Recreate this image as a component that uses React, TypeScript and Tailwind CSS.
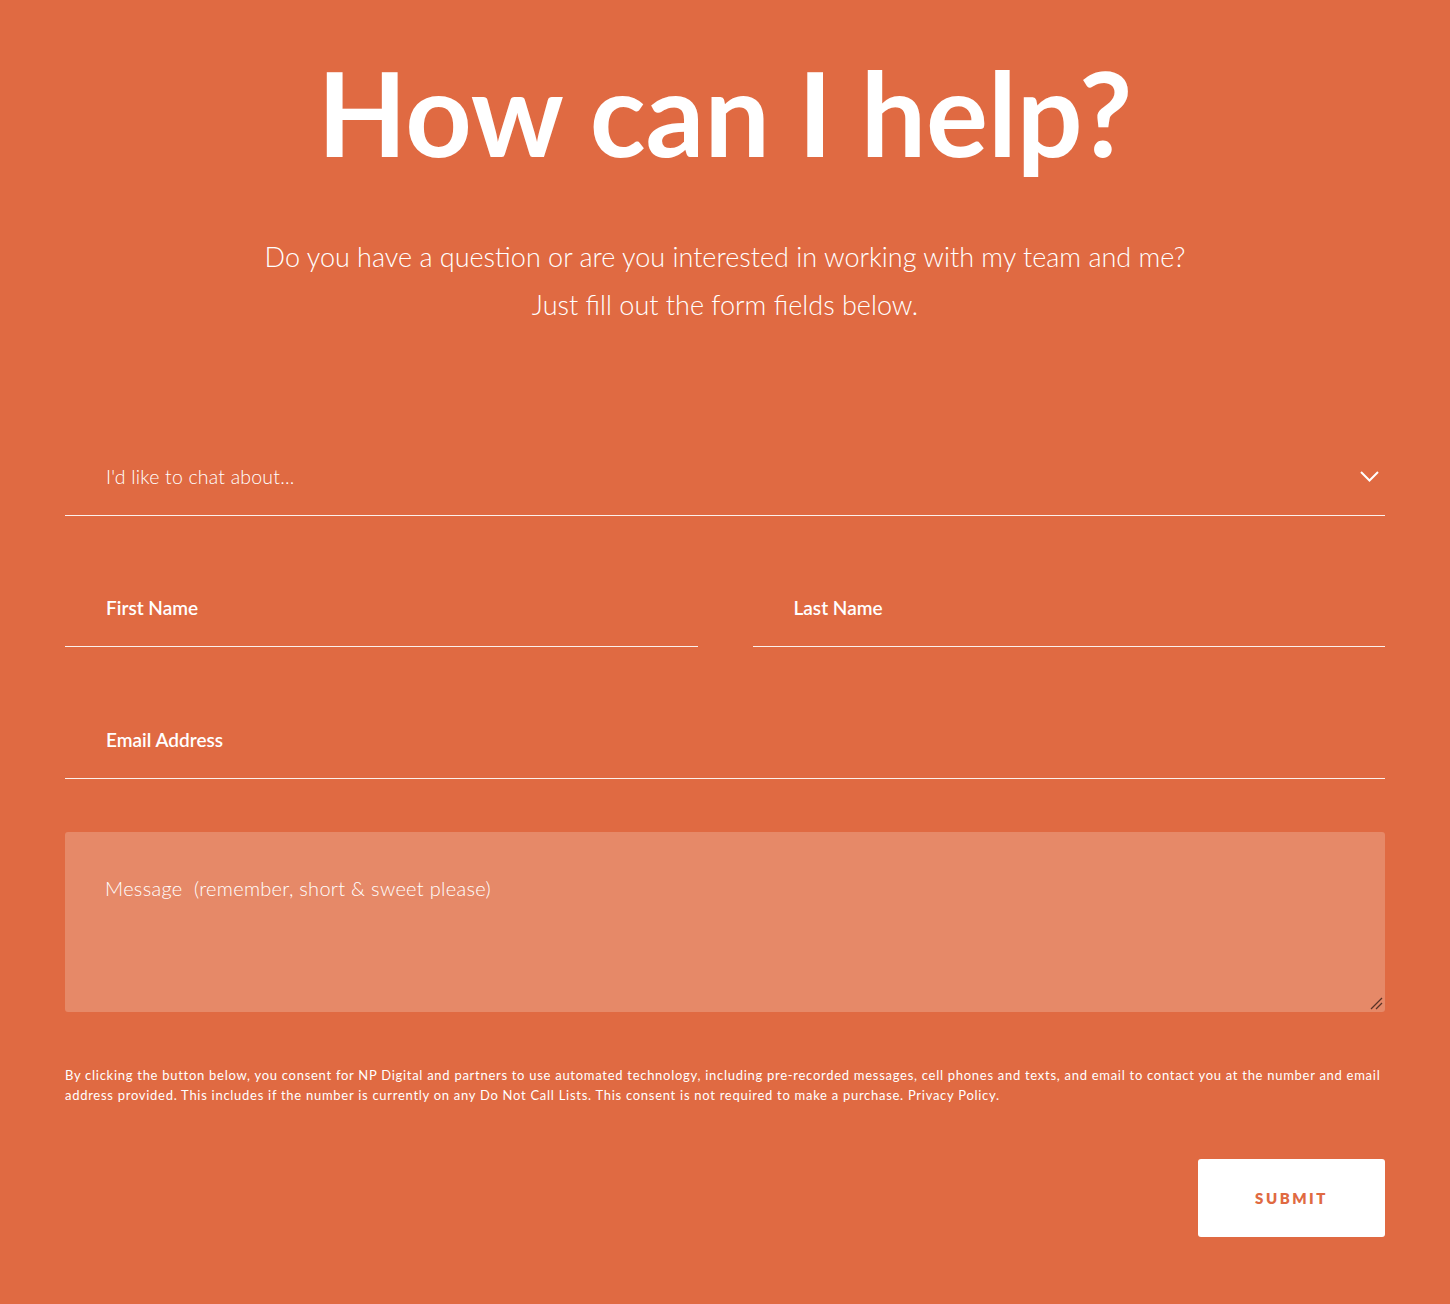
const font = { fontFamily: "Lato, 'Open Sans', sans-serif" };

function LineField({ label }: { label: string }) {
  return (
    <div className="border-b border-white/90 h-[92px] flex items-end pb-[29px] pl-[41px]">
      <span className="text-[19px] leading-none text-white font-semibold">{label}</span>
    </div>
  );
}

export default function App() {
  return (
    <div className="min-h-[1304px] bg-[#e06a42] text-white" style={font}>
      <div className="mx-auto w-[1320px] pt-[48px]">
        <h1 className="text-center text-[116px] font-bold leading-[130px]">How can I help?</h1>

        <div className="mt-[55px] text-center text-[27px] font-light leading-[48px]">
          <p>Do you have a question or are you interested in working with my team and me?</p>
          <p>Just fill out the form fields below.</p>
        </div>

        <form className="mt-[109px]">
          {/* topic select */}
          <div className="border-b border-white/90 h-[78px] flex items-center justify-between pl-[41px] pr-[6px]">
            <span className="text-[19.5px] font-light tracking-[0.2px]">I'd like to chat about...</span>
            <svg className="w-[19px] h-[11px]" viewBox="0 0 19 11" fill="none">
              <path d="M1 1 L9.5 9.5 L18 1" stroke="white" strokeWidth="2" />
            </svg>
          </div>

          <div className="grid grid-cols-2 gap-[55px] mt-[39px]">
            <LineField label="First Name" />
            <LineField label="Last Name" />
          </div>

          <div className="mt-[40px]">
            <LineField label="Email Address" />
          </div>

          <div className="relative mt-[53px] h-[180px] rounded-[3px] bg-[#e68968] pl-[40px] pt-[41px]">
            <span className="text-[20px] font-light tracking-[0.3px]">Message&nbsp; (remember, short &amp; sweet please)</span>
            <svg className="absolute right-[2px] bottom-[2px] w-[14px] h-[14px]" viewBox="0 0 14 14">
              <path d="M2 13 L13 2" stroke="#5a3326" strokeWidth="1.3" />
              <path d="M7 13 L13 7" stroke="#5a3326" strokeWidth="1.3" />
            </svg>
          </div>

          <p className="mt-[53px] text-[13px] leading-[20px] font-normal tracking-[0.72px]">
            By clicking the button below, you consent for NP Digital and partners to use automated technology, including pre-recorded messages, cell phones and texts, and email to contact you at the number and email address provided. This includes if the number is currently on any Do Not Call Lists. This consent is not required to make a purchase. Privacy Policy.
          </p>

          <div className="flex justify-end mt-[54px]">
            <button
              type="button"
              className="w-[187px] h-[78px] rounded-[3px] bg-white text-[#e06a42] text-[15px] font-extrabold tracking-[2.5px]"
            >
              SUBMIT
            </button>
          </div>
        </form>
      </div>
    </div>
  );
}
